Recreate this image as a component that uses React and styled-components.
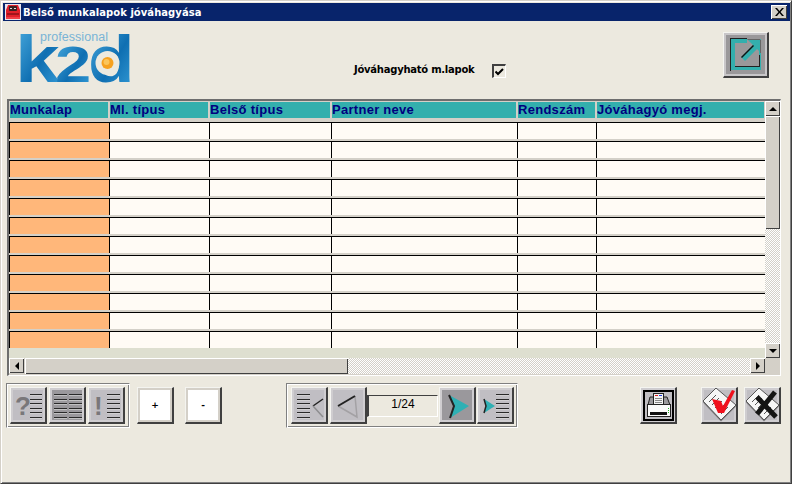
import styled, { createGlobalStyle } from "styled-components";

const GlobalStyle = createGlobalStyle`
  html, body {
    margin: 0;
    padding: 0;
    background: #ece9df;
  }
  * {
    box-sizing: border-box;
  }
`;

const columns = [
  { title: "Munkalap", width: 100 },
  { title: "Ml. típus", width: 100 },
  { title: "Belső típus", width: 122 },
  { title: "Partner neve", width: 186 },
  { title: "Rendszám", width: 79 },
  { title: "Jóváhagyó megj.", width: 169 },
];

const rows = Array.from({ length: 12 }, (_, i) => i);
const gridColumns = columns.map((c) => `${c.width}px`).join(" ");

const Lines = ({ x, y = 3, width, count = 6, gap = 4.6 }) => (
  <g>
    {Array.from({ length: count }, (_, i) => {
      const top = Math.round(y + i * gap);
      return (
        <g key={i}>
          <line x1={x} x2={x + width} y1={top + 0.5} y2={top + 0.5} stroke="#2a2a2a" />
          <line x1={x} x2={x + width} y1={top + 1.5} y2={top + 1.5} stroke="#dcdcdc" strokeOpacity="0.6" />
        </g>
      );
    })}
  </g>
);

const AppIcon = () => (
  <svg width="16" height="16" viewBox="0 0 16 16">
    <rect width="16" height="16" fill="#e8e4ec" />
    <path d="M3 1h10l2 5v9H1V6z" fill="#e0202a" />
    <rect x="4" y="2" width="8" height="5" rx="1" fill="#3a2020" />
    <rect x="5" y="4" width="2" height="1" fill="#ddd" />
    <rect x="9" y="4" width="2" height="1" fill="#ddd" />
    <rect x="2" y="9" width="12" height="2" fill="#a0141c" />
    <rect x="1" y="13" width="14" height="2" fill="#f04048" />
  </svg>
);

const CloseIcon = () => (
  <svg width="9" height="8" viewBox="0 0 9 8">
    <path d="M0 0h2l2.500 3L7 0h2L5.500 4 9 8H7L4.500 5 2 8H0l3.500-4z" fill="#000" />
  </svg>
);

const Logo = () => (
  <LogoSvg width="114" height="54" viewBox="0 0 114 54">
    <defs>
      <linearGradient id="k2dBlue" x1="0" y1="0" x2="1" y2="1">
        <stop offset="0" stopColor="#4fb0e2" />
        <stop offset="0.55" stopColor="#0f6fb2" />
        <stop offset="1" stopColor="#3aa2dc" />
      </linearGradient>
    </defs>
    <text x="21" y="9" fontFamily="Liberation Sans, sans-serif" fontSize="12.500" fill="#79b4d6" textLength="68">
      professional
    </text>
    <g fontFamily="Liberation Sans, sans-serif" fontWeight="700" fill="url(#k2dBlue)">
      <text transform="translate(-4 50) scale(1.2 1)" fontSize="67">k</text>
      <text transform="translate(36 50) scale(1.3 1)" fontSize="50">2</text>
      <text transform="translate(69 50) scale(1.14 1)" fontSize="67">d</text>
    </g>
    <circle cx="88.500" cy="31" r="12" fill="#ece9df" />
    <circle cx="88.500" cy="31" r="6" fill="#f6a11f" />
    <circle cx="87.500" cy="30" r="3" fill="#fbc55a" />
  </LogoSvg>
);

const ExitIcon = () => (
  <svg width="32" height="33" viewBox="0 0 32 33">
    <path d="M0 0h17v6h14v26H0z" fill="#33afad" />
    <rect x="5" y="5" width="24" height="23" fill="#9a989a" />
    <path d="M0 0h17v1H1v32H0z" fill="#222" />
    <path d="M5 28h24v-11h1v12H5z" fill="#222" />
    <path d="M17 1h14v14l-4-4-12 12-4-4 12-12z" fill="#33afad" />
    <path d="M11 19L23 7l1 1-12 12z" fill="#111" />
    <path d="M17 1h13v1H18zM30 2h1v13h-1z" fill="#666" />
  </svg>
);

const QueryIcon = () => (
  <svg width="29" height="29" viewBox="0 0 29 29">
    <text x="1" y="24" fontFamily="Liberation Sans, sans-serif" fontWeight="700" fontSize="26" fill="#79777a">?</text>
    <Lines x={16} width={12} />
  </svg>
);

const TableIcon = () => (
  <svg width="29" height="29" viewBox="0 0 29 29">
    <Lines x={1} width={13} />
    <Lines x={16} width={13} />
  </svg>
);

const AlertIcon = () => (
  <svg width="29" height="29" viewBox="0 0 29 29">
    <text x="2" y="24" fontFamily="Liberation Sans, sans-serif" fontWeight="700" fontSize="26" fill="#79777a">!</text>
    <Lines x={15} width={13} />
  </svg>
);

const FirstIcon = () => (
  <svg width="29" height="29" viewBox="0 0 29 29">
    <Lines x={2} width={13} />
    <path d="M28 8L18 15" stroke="#222" strokeWidth="1.500" fill="none" />
    <path d="M18 15l10 11" stroke="#8d8d8f" strokeWidth="1.500" fill="none" />
  </svg>
);

const PrevIcon = () => (
  <svg width="29" height="29" viewBox="0 0 29 29">
    <path d="M4 15l19 11-2-21" stroke="#a3a1a4" strokeWidth="1.500" fill="none" />
    <path d="M4 15L21 5" stroke="#222" strokeWidth="2" fill="none" />
  </svg>
);

const NextIcon = () => (
  <svg width="29" height="29" viewBox="0 0 29 29">
    <path d="M6 4l20 11L7 27l4-12z" fill="#2fb0b4" />
    <path d="M6 4l5 11-4 12" stroke="#222" strokeWidth="2" fill="none" />
  </svg>
);

const LastIcon = () => (
  <svg width="29" height="29" viewBox="0 0 29 29">
    <path d="M3 8l11 7-11 7 2-7z" fill="#2fb0b4" />
    <path d="M3 8l2 7-2 7" stroke="#222" strokeWidth="1.500" fill="none" />
    <Lines x={15} width={13} />
  </svg>
);

const PrinterIcon = () => (
  <svg width="31" height="31" viewBox="0 0 31 31">
    <rect x="1" y="1" width="29" height="29" fill="#c0bec3" stroke="#000" strokeWidth="2" />
    <path d="M7 7h4v8H5zM20 7h4l3 8h-7z" fill="#9a989c" stroke="#222" />
    <rect x="10.500" y="3.500" width="10" height="11" fill="#f4f4f4" stroke="#222" />
    <rect x="12" y="5" width="3" height="1" fill="#e02020" />
    <rect x="16" y="5" width="3" height="1" fill="#2040e0" />
    <path d="M12 8.500h7M12 10.500h7M12 12.500h7" stroke="#888" />
    <rect x="4.500" y="14.500" width="23" height="12" fill="#fafafa" stroke="#222" />
    <rect x="7" y="22" width="17" height="3" fill="#111" />
    <rect x="25" y="18" width="1" height="1" fill="#20b020" />
    <rect x="25" y="20" width="1" height="1" fill="#20b020" />
    <rect x="25" y="22" width="1" height="1" fill="#20b020" />
  </svg>
);

const Papers = () => (
  <>
    <path d="M1 13L14 0l20 17-15 15z" fill="#7b797c" transform="translate(0 1.500)" />
    <path d="M1 13L14 0l20 17-15 15z" fill="#f6f6f6" stroke="#555" />
    <path d="M7 14l7-7M10 17l7-7M13 20l7-7M16 23l7-7M19 26l7-7" stroke="#555" />
  </>
);

const ApproveIcon = () => (
  <svg width="34" height="34" viewBox="0 0 34 34">
    <Papers />
    <path d="M10 11l9 2 2 5 9-16 3 1-11 22h-6z" fill="#f0101c" />
  </svg>
);

const RejectIcon = () => (
  <svg width="34" height="34" viewBox="0 0 34 34">
    <Papers />
    <path d="M12 9l19 20M30 4L12 26" stroke="#141414" strokeWidth="5" fill="none" />
  </svg>
);

const ArrowGlyph = ({ dir }) => {
  const shapes = {
    up: "M0 4L4 0l4 4z",
    down: "M0 0h8L4 4z",
    left: "M4 0v8L0 4z",
    right: "M0 0l4 4-4 4z",
  };
  const horizontal = dir === "left" || dir === "right";
  return (
    <svg width={horizontal ? 4 : 8} height={horizontal ? 8 : 4} viewBox={horizontal ? "0 0 4 8" : "0 0 8 4"}>
      <path d={shapes[dir]} fill="#000" />
    </svg>
  );
};

const App = () => (
  <Window>
    <GlobalStyle />
    <TitleBar>
      <AppIcon />
      <TitleText>Belső munkalapok jóváhagyása</TitleText>
      <CloseButton>
        <CloseIcon />
      </CloseButton>
    </TitleBar>

    <Content>
      <TopRow>
        <Logo />
        <FilterLabel>Jóváhagyható m.lapok</FilterLabel>
        <CheckBox>
          <svg width="9" height="8" viewBox="0 0 9 8">
            <path d="M0.500 3.500L3 6l5-5" stroke="#000" strokeWidth="2" fill="none" />
          </svg>
        </CheckBox>
        <ExitButton>
          <ExitIcon />
        </ExitButton>
      </TopRow>

      <GridFrame>
        <GridMain>
          <TablePane>
            <HeaderRow>
              {columns.map((c) => (
                <HeaderCell key={c.title}>{c.title}</HeaderCell>
              ))}
            </HeaderRow>
            {rows.map((r) => (
              <DataRow key={r}>
                {columns.map((c, i) => (
                  <DataCell key={c.title} $key={i === 0} />
                ))}
              </DataRow>
            ))}
          </TablePane>
          <VScroll>
            <ScrollButton>
              <ArrowGlyph dir="up" />
            </ScrollButton>
            <VThumb />
            <Track />
            <ScrollButton>
              <ArrowGlyph dir="down" />
            </ScrollButton>
          </VScroll>
        </GridMain>
        <HScroll>
          <ScrollButton>
            <ArrowGlyph dir="left" />
          </ScrollButton>
          <HThumb />
          <Track />
          <ScrollButton>
            <ArrowGlyph dir="right" />
          </ScrollButton>
          <ScrollCorner />
        </HScroll>
      </GridFrame>

      <Toolbar>
        <ButtonGroup>
          <ToolButton><QueryIcon /></ToolButton>
          <ToolButton $pressed><TableIcon /></ToolButton>
          <ToolButton><AlertIcon /></ToolButton>
        </ButtonGroup>
        <PlusButton>+</PlusButton>
        <MinusButton>-</MinusButton>
        <NavGroup>
          <ToolButton><FirstIcon /></ToolButton>
          <ToolButton><PrevIcon /></ToolButton>
          <PageBox>1/24</PageBox>
          <ToolButton $pressed><NextIcon /></ToolButton>
          <ToolButton><LastIcon /></ToolButton>
        </NavGroup>
        <PrintButton><PrinterIcon /></PrintButton>
        <ApproveButton><ApproveIcon /></ApproveButton>
        <RejectButton><RejectIcon /></RejectButton>
      </Toolbar>
    </Content>
  </Window>
);

export default App;

const Window = styled.div`
  width: 792px;
  height: 484px;
  background: #ece9df;
  border-top: 1px solid #d4d0c8;
  border-left: 1px solid #d4d0c8;
  border-right: 1px solid #404040;
  border-bottom: 1px solid #404040;
  padding: 2px 1px 1px 2px;
  box-shadow: inset 1px 1px 0 #fff, inset -1px -1px 0 #808080;
  font-family: "Liberation Sans", Arial, sans-serif;
`;

const TitleBar = styled.div`
  height: 18px;
  background: #08246b;
  display: flex;
  align-items: center;
  padding: 0 3px 0 2px;
`;

const TitleText = styled.span`
  color: #fff;
  font-family: "DejaVu Sans", sans-serif;
  font-weight: 700;
  font-size: 10px;
  letter-spacing: 0.05px;
  margin-left: 2px;
  flex: 1;
  white-space: nowrap;
`;

const CloseButton = styled.div`
  width: 16px;
  height: 14px;
  background: #d4d0c8;
  display: flex;
  align-items: center;
  justify-content: center;
  box-shadow: inset 1px 1px 0 #fff, inset -1px -1px 0 #404040;
`;

const Content = styled.div`
  padding: 0 0 0 4px;
`;

const TopRow = styled.div`
  height: 78px;
  display: flex;
  align-items: flex-start;
  padding: 11px 0 0 12px;
`;

const LogoSvg = styled.svg`
  flex: none;
  overflow: visible;
`;

const FilterLabel = styled.span`
  font-family: "DejaVu Sans", sans-serif;
  font-size: 10px;
  font-weight: 700;
  letter-spacing: -0.25px;
  color: #000;
  margin: 32px 0 0 221px;
  width: 138px;
  white-space: nowrap;
`;

const CheckBox = styled.div`
  width: 14px;
  height: 14px;
  margin-top: 32px;
  background: #ece9df;
  border-top: 2px solid #404040;
  border-left: 2px solid #404040;
  border-right: 1px solid #fff;
  border-bottom: 1px solid #fff;
  display: flex;
  align-items: center;
  justify-content: center;
`;

const Bevel = styled.div`
  display: flex;
  align-items: center;
  justify-content: center;
  flex: none;
  border-top: 1px solid #f4f4f0;
  border-left: 1px solid #f4f4f0;
  border-right: 2px solid #404040;
  border-bottom: 2px solid #404040;
`;

const ExitButton = styled(Bevel)`
  width: 46px;
  height: 46px;
  margin-left: 217px;
  background: #9a989a;
  box-shadow: inset 0 0 0 2px #c8c6c8;
`;

const GridFrame = styled.div`
  width: 774px;
  height: 277px;
  border-top: 2px solid #6e6e6e;
  border-left: 2px solid #6e6e6e;
  border-right: 1px solid #fff;
  border-bottom: 1px solid #fff;
  background: #d4d0c8;
  display: flex;
  flex-direction: column;
`;

const GridMain = styled.div`
  display: flex;
  height: 257px;
`;

const TablePane = styled.div`
  width: 756px;
  flex: none;
  padding-top: 1px;
  background: linear-gradient(to bottom, #d4d0c8 247px, #dedfd0 247px);
  overflow: hidden;
`;

const HeaderRow = styled.div`
  display: grid;
  grid-template-columns: ${gridColumns};
  height: 16px;
  margin-bottom: 4px;
`;

const HeaderCell = styled.div`
  margin: 0 1px;
  background: #33afad;
  color: #00007f;
  font-weight: 700;
  font-size: 13px;
  letter-spacing: 0.28px;
  line-height: 16px;
  white-space: nowrap;
  overflow: hidden;
`;

const DataRow = styled.div`
  display: grid;
  grid-template-columns: ${gridColumns};
  height: 17px;
  margin-bottom: 2px;
`;

const DataCell = styled.div`
  background: ${(p) => (p.$key ? "#ffb77a" : "#fffbf5")};
  border-top: 1px solid #000;
  border-left: 1px solid #000;
`;

const VScroll = styled.div`
  width: 15px;
  flex: none;
  display: flex;
  flex-direction: column;
`;

const ScrollButton = styled.div`
  width: 15px;
  height: 15px;
  flex: none;
  background: #d4d0c8;
  display: flex;
  align-items: center;
  justify-content: center;
  box-shadow: inset 1px 1px 0 #fff, inset -1px -1px 0 #404040;
`;

const VThumb = styled.div`
  height: 113px;
  flex: none;
  background: #d4d0c8;
  box-shadow: inset 1px 1px 0 #fff, inset -1px -1px 0 #404040;
`;

const Track = styled.div`
  flex: 1;
  background: repeating-conic-gradient(#d4d0c8 0 25%, #fff 0 50%) 0 0 / 2px 2px;
`;

const HScroll = styled.div`
  display: flex;
  height: 16px;
`;

const HThumb = styled.div`
  width: 323px;
  flex: none;
  margin-left: 1px;
  background: #d4d0c8;
  box-shadow: inset 1px 1px 0 #fff, inset -1px -1px 0 #404040;
`;

const ScrollCorner = styled.div`
  width: 15px;
  flex: none;
  background: #d4d0c8;
`;

const Toolbar = styled.div`
  display: flex;
  align-items: flex-start;
  margin: 7px 0 0 -1px;
`;

const Group = styled.div`
  display: flex;
  align-items: center;
  height: 45px;
  flex: none;
  border-top: 1px solid #808080;
  border-left: 1px solid #808080;
  border-right: 1px solid #fff;
  border-bottom: 1px solid #fff;
  box-shadow: inset 1px 1px 0 #fff, inset -1px -1px 0 #808080;
`;

const ButtonGroup = styled(Group)`
  width: 124px;
  padding: 0 3px;
  gap: 2px;
`;

const NavGroup = styled(Group)`
  width: 232px;
  margin-left: 64px;
  padding: 0 0 0 4px;
  & > :nth-child(1) {
    margin-right: 2px;
  }
  & > :nth-child(3),
  & > :nth-child(4) {
    margin-right: 1px;
  }
`;

const ToolButton = styled(Bevel)`
  width: 37px;
  height: 37px;
  background: ${(p) => (p.$pressed ? "#9a989c" : "#c0bec3")};
  box-shadow: inset 0 0 0 2px #cfcdd0;
`;

const WhiteButton = styled(Bevel)`
  width: 37px;
  height: 37px;
  margin-top: 4px;
  background: #fff;
  box-shadow: inset 0 0 0 2px #d4d0c8;
  font-family: "DejaVu Sans", sans-serif;
  font-size: 9px;
  font-weight: 700;
  color: #000;
`;

const PlusButton = styled(WhiteButton)`
  margin-left: 7px;
`;

const MinusButton = styled(WhiteButton)`
  margin-left: 11px;
`;

const PageBox = styled.div`
  width: 71px;
  height: 22px;
  flex: none;
  text-align: center;
  font-size: 12px;
  line-height: 16px;
  color: #000;
  background: #ece9df;
  border-top: 1px solid #404040;
  border-left: 2px solid #404040;
  border-right: 1px solid #fff;
  border-bottom: 1px solid #fff;
`;

const PrintButton = styled(ToolButton)`
  margin: 4px 0 0 122px;
`;

const ApproveButton = styled(ToolButton)`
  margin: 4px 6px 0 24px;
`;

const RejectButton = styled(ToolButton)`
  margin-top: 4px;
`;
